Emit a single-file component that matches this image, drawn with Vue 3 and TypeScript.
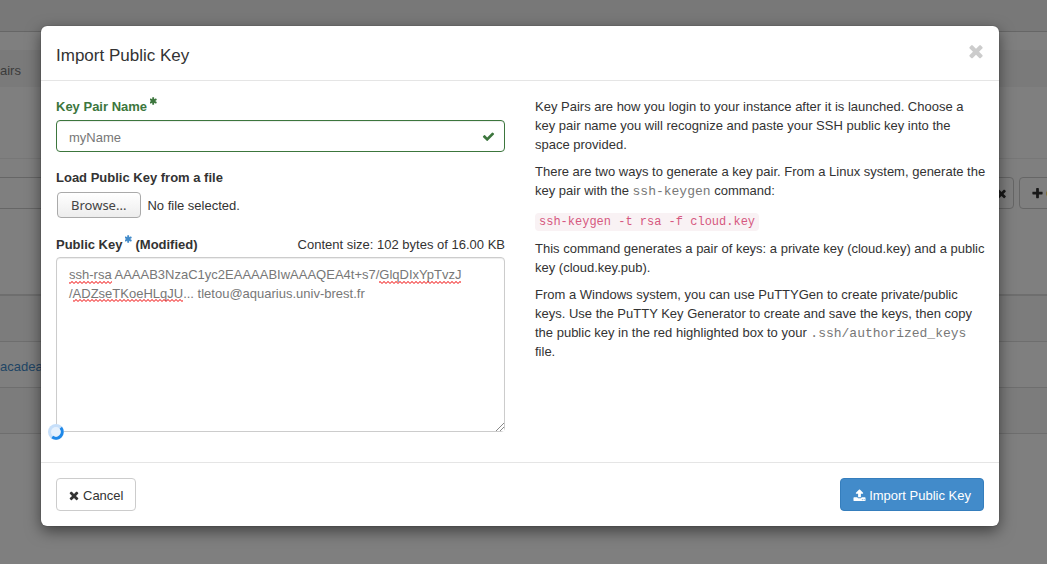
<script setup lang="ts">
import { ref } from 'vue'

const keyName = ref('myName')
const publicKey = ref('ssh-rsa AAAAB3NzaC1yc2EAAAABIwAAAQEA4t+s7/GlqDIxYpTvzJ\n/ADZseTKoeHLqJU... tletou@aquarius.univ-brest.fr')
const rows = ['', 'acadea', '']

const icons = {
  times: 'M1490 1322q0 40-28 68l-136 136q-28 28-68 28t-68-28l-294-294-294 294q-28 28-68 28t-68-28l-136-136q-28-28-28-68t28-68l294-294-294-294q-28-28-28-68t28-68l136-136q28-28 68-28t68 28l294 294 294-294q28-28 68-28t68 28l136 136q28 28 28 68t-28 68l-294 294 294 294q28 28 28 68z',
  check: 'M1671 566q0 40-28 68l-724 724-136 136q-28 28-68 28t-68-28l-136-136-362-362q-28-28-28-68t28-68l136-136q28-28 68-28t68 28l294 295 656-657q28-28 68-28t68 28l136 136q28 28 28 68z',
  upload: 'M1344 1472q0-26-19-45t-45-19-45 19-19 45 19 45 45 19 45-19 19-45zm256 0q0-26-19-45t-45-19-45 19-19 45 19 45 45 19 45-19 19-45zm128-224v320q0 40-28 68t-68 28h-1472q-40 0-68-28t-28-68v-320q0-40 28-68t68-28h427q21 56 70.5 92t110.5 36h256q61 0 110.5-36t70.5-92h427q40 0 68 28t28 68zm-325-648q-17 40-59 40h-256v448q0 26-19 45t-45 19h-256q-26 0-45-19t-19-45v-448h-256q-42 0-59-40-17-39 14-69l448-448q18-19 45-19t45 19l448 448q31 30 14 69z',
  plus: 'M1600 736v192q0 40-28 68t-68 28h-416v416q0 40-28 68t-68 28h-192q-40 0-68-28t-28-68v-416h-416q-40 0-68-28t-28-68v-192q0-40 28-68t68-28h416v-416q0-40 28-68t68-28h192q40 0 68 28t28 68v416h416q40 0 68 28t28 68z',
  asterisk: 'M1482 1050q46 26 59.5 77.5t-12.5 97.5l-64 110q-26 46-77.5 59.5t-97.5-12.5l-266-153v307q0 52-38 90t-90 38h-128q-52 0-90-38t-38-90v-307l-266 153q-46 26-97.5 12.5t-77.5-59.5l-64-110q-26-46-12.5-97.5t59.5-77.5l266-154-266-154q-46-26-59.5-77.5t12.5-97.5l64-110q26-46 77.5-59.5t97.5 12.5l266 153v-307q0-52 38-90t90-38h128q52 0 90 38t38 90v307l266-153q46-26 97.5-12.5t77.5 59.5l64 110q26 46 12.5 97.5t-59.5 77.5l-266 154z',
}
</script>

<template>
  <div class="screen">
    <div class="page" aria-hidden="true">
      <div class="topbar"></div>
      <div class="breadcrumb">airs</div>
      <div class="page-head"></div>
      <div class="toolbar">
        <div class="filter"></div>
        <div class="tool clear">
          <svg class="icon" viewBox="0 0 1792 1792"><path :d="icons.times" /></svg>
        </div>
        <div class="tool create">
          <svg class="icon" viewBox="0 0 1792 1792"><path :d="icons.plus" /></svg>
          <span>C</span>
        </div>
      </div>
      <div class="rows">
        <div v-for="(row, i) in rows" :key="i" class="row">{{ row }}</div>
      </div>
    </div>

    <div class="backdrop">
      <form class="modal" role="dialog" aria-labelledby="title" @submit.prevent>
        <header class="modal-header">
          <h1 id="title">Import Public Key</h1>
          <button type="button" class="close" aria-label="Close">
            <svg viewBox="0 0 1792 1792"><path :d="icons.times" /></svg>
          </button>
        </header>

        <div class="modal-body">
          <div class="fields">
            <label class="label success" for="name">
              Key Pair Name
              <svg class="required" viewBox="192 128 1408 1536"><path :d="icons.asterisk" /></svg>
            </label>
            <div class="name-box">
              <input id="name" v-model="keyName" type="text" />
              <svg class="icon valid" viewBox="0 0 1792 1792"><path :d="icons.check" /></svg>
            </div>

            <label class="label file-label" for="file">Load Public Key from a file</label>
            <div class="file">
              <input id="file" type="file" />
              <span class="browse">Browse...</span>
              <span>No file selected.</span>
            </div>

            <div class="key-head">
              <label class="label" for="key">
                Public Key
                <svg class="required blue" viewBox="192 128 1408 1536"><path :d="icons.asterisk" /></svg>
                (Modified)
              </label>
              <span>Content size: 102 bytes of 16.00 KB</span>
            </div>
            <div class="key-box">
              <textarea id="key" v-model="publicKey" spellcheck="false"></textarea>
              <svg class="squiggles" width="449" height="50" aria-hidden="true">
                <defs>
                  <pattern id="wave" width="4" height="3" patternUnits="userSpaceOnUse">
                    <path d="M-1 -.5L2 2.5L5 -.5" class="wave" />
                  </pattern>
                </defs>
                <rect x="13" y="24" width="43" height="3" />
                <rect x="323" y="24" width="82" height="3" />
                <rect x="17" y="42" width="110" height="3" />
              </svg>
              <svg class="spinner" viewBox="0 0 16 16" aria-hidden="true">
                <circle cx="8" cy="8" r="8" class="disc" />
                <circle cx="8" cy="8" r="5" class="core" />
                <path d="M12.8 3.8A6.4 6.4 0 0 1 4.2 13.1" class="arc" />
              </svg>
            </div>
          </div>

          <div class="help">
            <p>Key Pairs are how you login to your instance after it is launched. Choose a key pair name you will recognize and paste your SSH public key into the space provided.</p>
            <p>There are two ways to generate a key pair. From a Linux system, generate the key pair with the <samp>ssh-keygen</samp> command:</p>
            <p class="command"><code>ssh-keygen -t rsa -f cloud.key</code></p>
            <p>This command generates a pair of keys: a private key (cloud.key) and a public key (cloud.key.pub).</p>
            <p>From a Windows system, you can use PuTTYGen to create private/public keys. Use the PuTTY Key Generator to create and save the keys, then copy the public key in the red highlighted box to your <samp>.ssh/authorized_keys</samp> file.</p>
          </div>
        </div>

        <footer class="modal-footer">
          <button type="button" class="btn">
            <svg class="icon narrow" viewBox="256 0 1280 1792"><path :d="icons.times" /></svg>
            Cancel
          </button>
          <button type="submit" class="btn primary">
            <svg class="icon" viewBox="0 0 1792 1792"><path :d="icons.upload" /></svg>
            Import Public Key
          </button>
        </footer>
      </form>
    </div>
  </div>
</template>

<style>
body {
  background: #fff;
}
</style>

<style scoped>
* {
  box-sizing: border-box;
}
.screen {
  position: relative;
  min-height: 100vh;
  overflow: hidden;
  color: #333;
  font: 13px/19px "Liberation Sans", Arial, sans-serif;
}
.page {
  position: absolute;
  inset: 0;
  overflow: hidden;
}
.topbar {
  height: 32px;
  background: #f0f0f0;
  border-bottom: 1px solid #ccc;
}
.breadcrumb {
  height: 37px;
  margin-top: 18px;
  padding-top: 11px;
  background: #f5f5f5;
  color: #777;
}
.page-head {
  height: 72px;
  border-bottom: 1px solid #eee;
}
.toolbar {
  display: flex;
  margin-top: 18px;
  height: 32px;
}
.filter {
  flex: 1;
  border: 1px solid #ccc;
  border-left: 0;
}
.tool {
  display: flex;
  align-items: center;
  border: 1px solid #ccc;
  border-radius: 4px;
}
.clear {
  width: 30px;
  justify-content: flex-end;
  margin-right: 5px;
  padding-right: 5px;
}
.create {
  width: 80px;
  margin-right: -52px;
  padding-left: 11px;
  gap: 2px;
}
.create span {
  color: #e6952a;
}
.rows {
  margin-top: 85px;
  border-top: 2px solid #ddd;
}
.row {
  height: 46px;
  padding-top: 15px;
  border-bottom: 1px solid #ddd;
  color: #428bca;
}
.row:nth-child(odd) {
  background: #f9f9f9;
}
.backdrop {
  position: relative;
  min-height: 100vh;
  padding: 26px 48px 38px 41px;
  background: rgba(0, 0, 0, 0.5);
}
.modal {
  background: #fff;
  border-radius: 6px;
  box-shadow: 0 5px 15px rgba(0, 0, 0, 0.5), 0 0 1px #333;
}
.modal-header {
  display: flex;
  align-items: center;
  justify-content: space-between;
  height: 55px;
  padding: 5px 15px 0;
  border-bottom: 1px solid #e5e5e5;
}
h1 {
  margin: 0;
  font-size: 17px;
  font-weight: 400;
  line-height: 24px;
}
.close {
  width: 15px;
  height: 20px;
  margin-bottom: 10px;
  padding: 0;
  border: 0;
  background: none;
}
.close svg {
  display: block;
  width: 20px;
  height: 20px;
  margin-left: -3px;
  fill: #ccc;
}
.icon {
  width: 13px;
  height: 13px;
  fill: currentColor;
}
.narrow {
  width: 10px;
}
.modal-body {
  display: grid;
  grid-template-columns: 1fr 1fr;
  gap: 30px;
  padding: 16px 15px 30px;
}
.label {
  display: flex;
  gap: 3px;
  font-weight: 700;
}
.success {
  color: #3c763d;
}
.required {
  width: 7px;
  height: 8px;
  fill: currentColor;
}
.blue {
  fill: #428bca;
}
.name-box {
  position: relative;
  margin-top: 4px;
}
input[type="text"],
textarea {
  display: block;
  width: 100%;
  border: 1px solid #ccc;
  border-radius: 4px;
  background: #fff;
  color: #777;
  font: inherit;
  outline: 0;
  box-shadow: inset 0 1px 1px rgba(0, 0, 0, 0.075);
}
input[type="text"] {
  height: 32px;
  padding: 7px 12px 5px;
  border-color: #3c763d;
}
.valid {
  position: absolute;
  top: 10px;
  right: 10px;
  color: #3c763d;
}
.file-label {
  margin-top: 16px;
}
.file {
  position: relative;
  display: flex;
  align-items: center;
  gap: 6px;
  margin-top: 5px;
  padding-left: 1px;
}
.file input {
  position: absolute;
  inset: 0;
  width: 100%;
  opacity: 0;
}
.browse {
  height: 26px;
  padding: 3px 14px 3px 13px;
  border: 1px solid #aaa;
  border-radius: 4px;
  background: linear-gradient(#fff, #ededed);
  color: #444;
  font-family: "Noto Sans", sans-serif;
  line-height: 18px;
}
.key-head {
  display: flex;
  justify-content: space-between;
  margin-top: 17px;
}
.key-box {
  position: relative;
  margin-top: 3px;
}
textarea {
  height: 175px;
  padding: 7px 12px;
  resize: vertical;
}
textarea::-webkit-resizer {
  background:
    linear-gradient(135deg, #fff 62%, transparent 62%),
    repeating-linear-gradient(135deg, #888 0 1px, #fff 1px 3px);
}
.squiggles {
  position: absolute;
  top: 0;
  left: 0;
  pointer-events: none;
}
.squiggles rect {
  fill: url(#wave);
}
.squiggles .wave {
  fill: none;
  stroke: #f00000;
  stroke-width: 1;
}
.spinner {
  position: absolute;
  left: -8px;
  bottom: -8px;
  width: 16px;
  height: 16px;
}
.disc {
  fill: #c6dffa;
}
.core {
  fill: #e6f1fd;
}
.arc {
  fill: none;
  stroke: #1e88e8;
  stroke-width: 3;
}
.help {
  margin-right: -2px;
}
p {
  margin: 0 0 8px;
}
samp,
code {
  font-family: "Liberation Mono", monospace;
  line-height: 13px;
}
samp {
  color: #777;
  font-size: 13px;
}
.command {
  margin: 11px 0 9px;
}
code {
  padding: 2px 4px;
  border-radius: 4px;
  background: #f9f2f4;
  color: #d6587f;
  font-size: 12px;
}
.modal-footer {
  display: flex;
  justify-content: space-between;
  padding: 15px;
  border-top: 1px solid #e5e5e5;
}
.btn {
  display: flex;
  align-items: center;
  gap: 4px;
  height: 33px;
  padding: 1px 12px 0;
  border: 1px solid #ccc;
  border-radius: 4px;
  background: #fff;
  color: #333;
  font: inherit;
}
.primary {
  gap: 3px;
  border-color: #357ebd;
  background: #428bca;
  color: #fff;
}
</style>
